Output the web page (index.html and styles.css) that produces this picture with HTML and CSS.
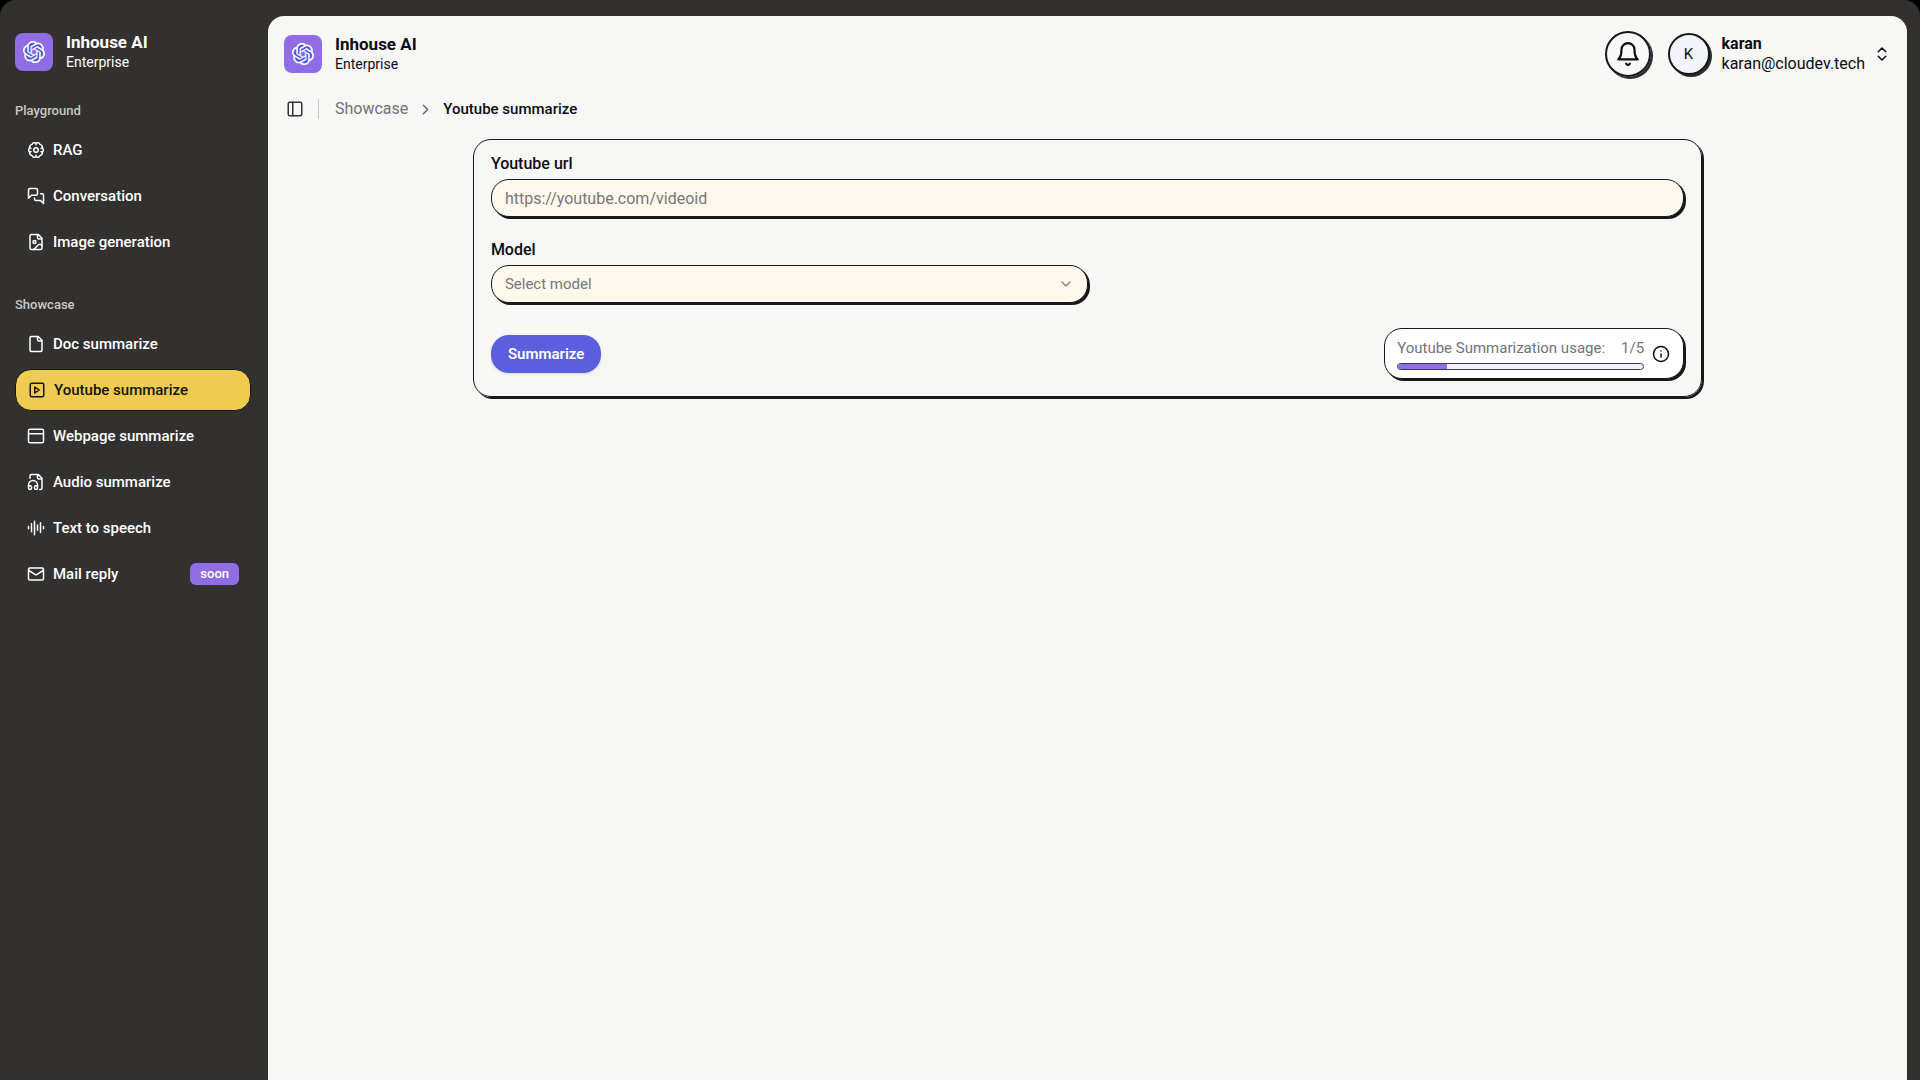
FILE: index.html
```html
<!DOCTYPE html>
<html lang="en">
<head>
    <meta charset="utf-8">
    <title>Inhouse AI - Youtube summarize</title>
    <link rel="stylesheet" href="styles.css">
</head>
<body>

    <!-- logo shape, used in the sidebar and the header -->
    <svg class="sprite" width="0" height="0" aria-hidden="true">
        <symbol id="logo" viewBox="0 0 24 24">
            <circle cx="12" cy="12" r="6.5" fill="none" stroke="#4355dd" stroke-width="7"/>
            <path fill="#fff" stroke="#fff" stroke-width=".3" d="M22.2819 9.8211a5.9847 5.9847 0 0 0-.5157-4.9108 6.0462 6.0462 0 0 0-6.5098-2.9A6.0651 6.0651 0 0 0 4.9807 4.1818a5.9847 5.9847 0 0 0-3.9977 2.9 6.0462 6.0462 0 0 0 .7427 7.0966 5.98 5.98 0 0 0 .511 4.9107 6.051 6.051 0 0 0 6.5146 2.9001A5.9847 5.9847 0 0 0 13.2599 24a6.0557 6.0557 0 0 0 5.7718-4.2058 5.9894 5.9894 0 0 0 3.9977-2.9001 6.0557 6.0557 0 0 0-.7475-7.0729zm-9.022 12.6081a4.4755 4.4755 0 0 1-2.8764-1.0408l.1419-.0804 4.7783-2.7582a.7948.7948 0 0 0 .3927-.6813v-6.7369l2.02 1.1686a.071.071 0 0 1 .038.052v5.5826a4.504 4.504 0 0 1-4.4945 4.4944zm-9.6607-4.1254a4.4708 4.4708 0 0 1-.5346-3.0137l.142.0852 4.783 2.7582a.7712.7712 0 0 0 .7806 0l5.8428-3.3685v2.3324a.0804.0804 0 0 1-.0332.0615L9.74 19.9502a4.4992 4.4992 0 0 1-6.1408-1.6464zM2.3408 7.8956a4.485 4.485 0 0 1 2.3655-1.9728V11.6a.7664.7664 0 0 0 .3879.6765l5.8144 3.3543-2.0201 1.1685a.0757.0757 0 0 1-.071 0l-4.8303-2.7865A4.504 4.504 0 0 1 2.3408 7.872zm16.5963 3.8558L13.1038 8.364 15.1192 7.2a.0757.0757 0 0 1 .071 0l4.8303 2.7913a4.4944 4.4944 0 0 1-.6765 8.1042v-5.6772a.79.79 0 0 0-.407-.667zm2.0107-3.0231l-.142-.0852-4.7735-2.7818a.7759.7759 0 0 0-.7854 0L9.409 9.2297V6.8974a.0662.0662 0 0 1 .0284-.0615l4.8303-2.7866a4.4992 4.4992 0 0 1 6.6802 4.66zM8.3065 12.863l-2.02-1.1638a.0804.0804 0 0 1-.038-.0567V6.0742a4.4992 4.4992 0 0 1 7.3757-3.4537l-.142.0805L8.704 5.459a.7948.7948 0 0 0-.3927.6813zm1.0976-2.3654l2.602-1.4998 2.6069 1.4998v2.9994l-2.5974 1.4997-2.6067-1.4997Z"/>
        </symbol>
    </svg>

    <div class="app">
        <aside class="sidebar">
            <div class="brand">
                <span class="brand-logo"><svg width="22" height="22"><use href="#logo"/></svg></span>
                <div>
                    <div class="brand-name">Inhouse AI</div>
                    <div class="brand-plan">Enterprise</div>
                </div>
            </div>

            <nav class="menu">
                <h2>Playground</h2>
                <a href="#">
                    <svg class="icon" viewBox="0 0 24 24"><circle cx="12" cy="12" r="3"/><path d="M12 3.2c1.3-1.6 4.6-1.2 5.2 1.3 2.4.2 3.9 2.5 3.2 4.5 1.8 1.6 1.8 4.4 0 6 .7 2-.8 4.3-3.2 4.5-.6 2.5-3.9 2.9-5.2 1.3-1.3 1.6-4.6 1.2-5.2-1.3-2.4-.2-3.9-2.5-3.2-4.5-1.8-1.6-1.8-4.4 0-6-.7-2 .8-4.3 3.2-4.5.6-2.5 3.9-2.9 5.2-1.3zM12 3.5V5M12 19v1.5M3.8 9l1.500.8M20.200 9l-1.500.8M3.800 15l1.500-.8M20.200 15l-1.500-.8"/></svg>
                    RAG
                </a>
                <a href="#">
                    <svg class="icon" viewBox="0 0 24 24"><path d="M14 9a2 2 0 0 1-2 2H6l-4 4V4a2 2 0 0 1 2-2h8a2 2 0 0 1 2 2zM18 9h2a2 2 0 0 1 2 2v11l-4-4h-6a2 2 0 0 1-2-2v-1"/></svg>
                    Conversation
                </a>
                <a href="#">
                    <svg class="icon" viewBox="0 0 24 24"><path d="M15 2H6a2 2 0 0 0-2 2v16a2 2 0 0 0 2 2h12a2 2 0 0 0 2-2V7zM14 2v4a2 2 0 0 0 2 2h4"/><circle cx="10" cy="12" r="2"/><path d="m20 17-1.300-1.300a2.400 2.400 0 0 0-3.400 0L9 22"/></svg>
                    Image generation
                </a>
            </nav>

            <nav class="menu">
                <h2>Showcase</h2>
                <a href="#">
                    <svg class="icon" viewBox="0 0 24 24"><path d="M15 2H6a2 2 0 0 0-2 2v16a2 2 0 0 0 2 2h12a2 2 0 0 0 2-2V7zM14 2v4a2 2 0 0 0 2 2h4"/></svg>
                    Doc summarize
                </a>
                <a href="#" class="active">
                    <svg class="icon" viewBox="0 0 24 24"><rect x="3" y="3" width="18" height="18" rx="2"/><path d="m9 8 6 4-6 4z"/></svg>
                    Youtube summarize
                </a>
                <a href="#">
                    <svg class="icon" viewBox="0 0 24 24"><rect x="2" y="3" width="20" height="18" rx="2"/><path d="M2 9h20"/></svg>
                    Webpage summarize
                </a>
                <a href="#">
                    <svg class="icon" viewBox="0 0 24 24"><path d="M4 7V4a2 2 0 0 1 2-2h9l5 5v13a2 2 0 0 1-2 2h-1M14 2v4a2 2 0 0 0 2 2h4M2 19a2 2 0 1 1 4 0v1a2 2 0 1 1-4 0v-4a6 6 0 0 1 12 0v4a2 2 0 1 1-4 0v-1a2 2 0 1 1 4 0"/></svg>
                    Audio summarize
                </a>
                <a href="#">
                    <svg class="icon" viewBox="0 0 24 24"><path d="M2 10v3M6 6v11M10 3v18M14 8v7M18 5v13M22 10v3"/></svg>
                    Text to speech
                </a>
                <a href="#">
                    <svg class="icon" viewBox="0 0 24 24"><rect x="2" y="4" width="20" height="16" rx="2"/><path d="m22 7-9 5.700a2 2 0 0 1-2 0L2 7"/></svg>
                    Mail reply
                    <span class="badge">soon</span>
                </a>
            </nav>
        </aside>

        <main class="panel">
            <header class="topbar">
                <div class="brand">
                    <span class="brand-logo"><svg width="22" height="22"><use href="#logo"/></svg></span>
                    <div>
                        <div class="brand-name">Inhouse AI</div>
                        <div class="brand-plan">Enterprise</div>
                    </div>
                </div>

                <button class="bell" type="button" aria-label="Notifications">
                    <svg class="icon" viewBox="0 0 24 24"><path d="M6 8a6 6 0 0 1 12 0c0 7 3 9 3 9H3s3-2 3-9M10.300 21a1.940 1.940 0 0 0 3.400 0"/></svg>
                </button>
                <button class="user" type="button">
                    <span class="avatar">K</span>
                    <span class="user-text">
                        <strong>karan</strong>
                        <span>karan@cloudev.tech</span>
                    </span>
                    <svg class="icon" viewBox="0 0 24 24"><path d="m7 15 5 5 5-5M7 9l5-5 5 5"/></svg>
                </button>
            </header>

            <div class="crumbs">
                <button class="toggle" type="button" aria-label="Toggle sidebar">
                    <svg class="icon" viewBox="0 0 24 24"><rect x="3" y="3" width="18" height="18" rx="2"/><path d="M9 3v18"/></svg>
                </button>
                <span class="divider"></span>
                <a href="#">Showcase</a>
                <svg class="icon" viewBox="0 0 24 24"><path d="m9 18 6-6-6-6"/></svg>
                <span class="current">Youtube summarize</span>
            </div>

            <form class="card">
                <label for="url">Youtube url</label>
                <input type="text" id="url" placeholder="https://youtube.com/videoid">

                <label for="model">Model</label>
                <div class="select-wrapper">
                    <select id="model">
                        <option>Select model</option>
                    </select>
                    <svg class="icon" viewBox="0 0 24 24"><path d="m6 9 6 6 6-6"/></svg>
                </div>

                <div class="actions">
                    <button class="submit" type="button">Summarize</button>
                    <div class="usage">
                        <div>
                            <div class="usage-text">
                                <span>Youtube Summarization usage:</span>
                                <span>1/5</span>
                            </div>
                            <div class="bar"><div class="bar-fill" style="width: 20%"></div></div>
                        </div>
                        <svg class="icon" viewBox="0 0 24 24"><circle cx="12" cy="12" r="10"/><path d="M12 16v-4M12 8h.01"/></svg>
                    </div>
                </div>
            </form>
        </main>
    </div>

</body>
</html>
```
FILE: styles.css
```css
* {
    box-sizing: border-box;
}

body {
    margin: 0;
    background: #000;
    color: #0b0c14;
    font-family: Roboto, "Liberation Sans", sans-serif;
    font-size: 15px;
    line-height: 20px;
}

a {
    color: inherit;
    text-decoration: none;
}

button, input, select {
    font: inherit;
    color: inherit;
}

button {
    padding: 0;
    border: 0;
    background: none;
    cursor: pointer;
}

.sprite {
    position: absolute;
}

.icon {
    width: 18px;
    height: 18px;
    flex: none;
    fill: none;
    stroke: currentColor;
    stroke-width: 2;
    stroke-linecap: round;
    stroke-linejoin: round;
}

.app {
    display: flex;
    min-height: 100vh;
    padding: 16px 13px 0 0;
    background: #32312f;
    border-radius: 16px 16px 0 0;
}

/* logo and name */
.brand {
    display: flex;
    align-items: center;
    gap: 13px;
}

.brand-logo {
    display: flex;
    align-items: center;
    justify-content: center;
    width: 38px;
    height: 38px;
    border-radius: 8px;
    background: #906ce5;
}

.brand-name {
    font-size: 17px;
    font-weight: 700;
}

.brand-plan {
    font-size: 14px;
}

/* sidebar */
.sidebar {
    flex: none;
    width: 268px;
    padding: 16px 17px 0 15px;
    color: #fff;
}

.menu {
    display: flex;
    flex-direction: column;
    gap: 4px;
    margin-top: 29px;
}

.menu + .menu {
    margin-top: 32px;
}

.menu h2 {
    margin: 0 0 4px;
    color: #c9c8c6;
    font-size: 13px;
    font-weight: 500;
}

.menu a {
    display: flex;
    align-items: center;
    gap: 8px;
    height: 42px;
    padding: 0 12px;
    border-radius: 16px;
    font-weight: 500;
}

.menu .active {
    border: 1px solid #16150f;
    background: #efcb52;
    color: #16150f;
}

.badge {
    margin-left: auto;
    padding: 1px 10px;
    border-radius: 6px;
    background: #906ce5;
    font-size: 13px;
    font-weight: 500;
}

/* main panel */
.panel {
    flex: 1;
    padding-top: 14px;
    border-radius: 16px 16px 0 0;
    background: #f7f7f5;
}

.topbar {
    display: flex;
    align-items: center;
    gap: 17px;
    height: 48px;
    padding: 0 16px;
}

.topbar .brand {
    margin-right: auto;
}

.bell, .avatar {
    display: flex;
    align-items: center;
    justify-content: center;
    border: 2px solid #17171c;
    border-radius: 50%;
    box-shadow: 2px 2px 0 #2b2b2f;
}

.bell {
    width: 46px;
    height: 46px;
}

.bell .icon {
    width: 26px;
    height: 26px;
}

.user {
    display: flex;
    align-items: center;
    gap: 8px;
    font-size: 16px;
    text-align: left;
}

.avatar {
    width: 42px;
    height: 42px;
    margin-right: 4px;
    background: #f1f5f9;
    font-size: 15px;
}

.user-text strong, .user-text span {
    display: block;
}

.crumbs {
    display: flex;
    align-items: center;
    gap: 9px;
    margin: 21px 18px 20px;
}

.crumbs a {
    color: #71717a;
    font-size: 16px;
}

.crumbs .icon {
    width: 17px;
    height: 17px;
    color: #606068;
}

.crumbs .current {
    font-weight: 500;
}

.toggle {
    display: flex;
}

.crumbs .toggle .icon {
    width: 18px;
    height: 18px;
    color: #33333a;
}

.divider {
    width: 1px;
    height: 20px;
    margin: 0 7px 0 5px;
    background: #c9c9cc;
}

/* form */
.card {
    width: 75%;
    margin: 0 auto;
    padding: 14px 17px 17px;
    border: 1px solid #17171c;
    border-radius: 18px;
    box-shadow: 2px 2px 0 #17171c;
}

.card label {
    display: block;
    margin-bottom: 5px;
    font-size: 16px;
    font-weight: 500;
}

.card input, .card select {
    display: block;
    width: 100%;
    height: 38px;
    padding: 0 13px;
    border: 1px solid #17171c;
    border-radius: 18px;
    background: #fef9ea;
    box-shadow: 2px 2px 0 #17171c;
    color: #77777b;
}

.card input {
    margin-bottom: 23px;
    font-size: 16px;
}

.card input::placeholder {
    color: #77777b;
    opacity: 1;
}

.card select {
    appearance: none;
}

.select-wrapper {
    position: relative;
    width: 50%;
}

.select-wrapper .icon {
    position: absolute;
    top: 11px;
    right: 14px;
    width: 16px;
    height: 16px;
    color: #85857f;
    pointer-events: none;
}

.actions {
    display: flex;
    align-items: center;
    justify-content: space-between;
    margin-top: 25px;
}

.submit {
    height: 38px;
    padding: 0 17px;
    border-radius: 18px;
    background: #5b5fdd;
    box-shadow: 0 1px 3px #0002;
    color: #fff;
    font-weight: 600;
}

.usage {
    display: flex;
    align-items: center;
    gap: 8px;
    padding: 9px 13px 8px 12px;
    border: 1px solid #17171c;
    border-radius: 18px;
    background: #fff;
    box-shadow: 2px 2px 0 #17171c;
}

.usage-text {
    display: flex;
    justify-content: space-between;
    gap: 16px;
    color: #71717a;
}

.bar {
    height: 7px;
    margin-top: 5px;
    border: 1px solid #3d3947;
    border-radius: 4px;
    background: #f4effd;
    overflow: hidden;
}

.bar-fill {
    height: 100%;
    background: #906ce5;
}
```
